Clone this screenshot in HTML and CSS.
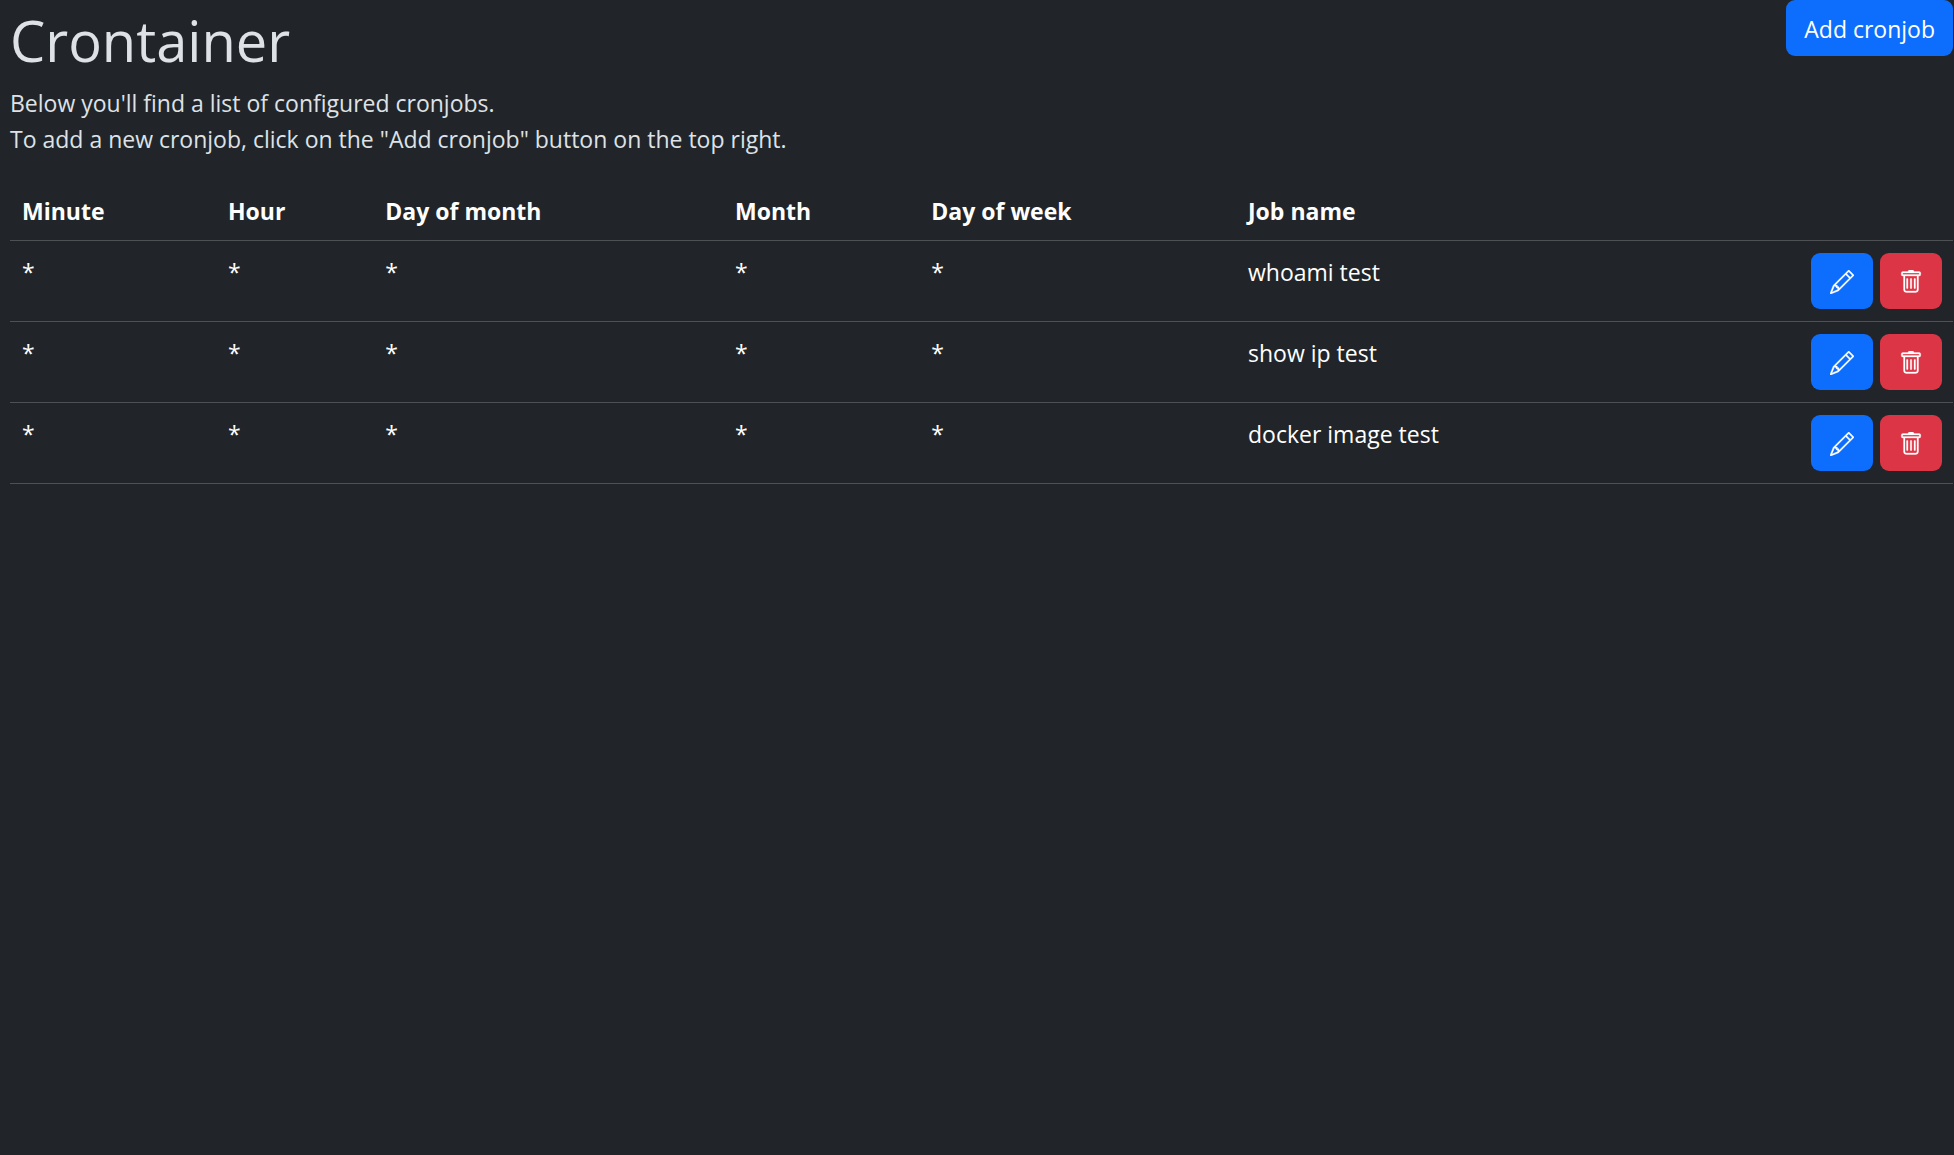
FILE: index.html
```html
<!DOCTYPE html>
<html lang="en">
<head>
    <meta charset="UTF-8">
    <meta name="viewport" content="width=device-width, initial-scale=1.0">
    <title>Crontainer</title>
    <link rel="stylesheet" href="styles.css">
</head>
<body>
    <!-- icons shared by all the rows -->
    <svg class="sprite" aria-hidden="true">
        <symbol id="pencil" viewBox="0 0 16 16">
            <path d="M12.146.146a.5.5 0 0 1 .708 0l3 3a.5.5 0 0 1 0 .708l-10 10a.5.5 0 0 1-.168.11l-5 2a.5.5 0 0 1-.65-.65l2-5a.5.5 0 0 1 .11-.168zM11.207 2.5 13.5 4.793 14.793 3.5 12.5 1.207zm1.586 3L10.5 3.207 4 9.707V10h.5a.5.5 0 0 1 .5.5v.5h.5a.5.5 0 0 1 .5.5v.5h.293zm-9.761 5.175-.106.106-1.528 3.821 3.821-1.528.106-.106A.5.5 0 0 1 5 12.5V12h-.5a.5.5 0 0 1-.5-.5V11h-.5a.5.5 0 0 1-.468-.325"/>
        </symbol>
        <symbol id="trash" viewBox="0 0 16 16">
            <path d="M5.5 5.5A.5.5 0 0 1 6 6v6a.5.5 0 0 1-1 0V6a.5.5 0 0 1 .5-.5m2.5 0a.5.5 0 0 1 .5.5v6a.5.5 0 0 1-1 0V6a.5.5 0 0 1 .5-.5m3 .5a.5.5 0 0 0-1 0v6a.5.5 0 0 0 1 0z"/>
            <path d="M14.5 3a1 1 0 0 1-1 1H13v9a2 2 0 0 1-2 2H5a2 2 0 0 1-2-2V4h-.5a1 1 0 0 1-1-1V2a1 1 0 0 1 1-1H6a1 1 0 0 1 1-1h2a1 1 0 0 1 1 1h3.5a1 1 0 0 1 1 1zM4.118 4 4 4.059V13a1 1 0 0 0 1 1h6a1 1 0 0 0 1-1V4.059L11.882 4zM2.5 3h11V2h-11z"/>
        </symbol>
    </svg>
    <div class="container">
        <header class="header">
            <div>
                <h1>Crontainer</h1>
                <p>Below you'll find a list of configured cronjobs.<br>
                To add a new cronjob, click on the "Add cronjob" button on the top right.</p>
            </div>
            <button type="button" class="btn btn-primary">Add cronjob</button>
        </header>
        <table class="jobs">
            <thead>
                <tr>
                    <th class="col-minute">Minute</th>
                    <th class="col-hour">Hour</th>
                    <th class="col-dom">Day of month</th>
                    <th class="col-month">Month</th>
                    <th class="col-dow">Day of week</th>
                    <th>Job name</th>
                    <th class="col-actions"></th>
                </tr>
            </thead>
            <tbody>
                <tr>
                    <td>*</td>
                    <td>*</td>
                    <td>*</td>
                    <td>*</td>
                    <td>*</td>
                    <td>whoami test</td>
                    <td class="col-actions">
                        <div class="actions">
                            <button type="button" class="btn btn-primary" aria-label="Edit"><svg class="icon"><use href="#pencil"/></svg></button>
                            <button type="button" class="btn btn-danger" aria-label="Delete"><svg class="icon"><use href="#trash"/></svg></button>
                        </div>
                    </td>
                </tr>
                <tr>
                    <td>*</td>
                    <td>*</td>
                    <td>*</td>
                    <td>*</td>
                    <td>*</td>
                    <td>show ip test</td>
                    <td class="col-actions">
                        <div class="actions">
                            <button type="button" class="btn btn-primary" aria-label="Edit"><svg class="icon"><use href="#pencil"/></svg></button>
                            <button type="button" class="btn btn-danger" aria-label="Delete"><svg class="icon"><use href="#trash"/></svg></button>
                        </div>
                    </td>
                </tr>
                <tr>
                    <td>*</td>
                    <td>*</td>
                    <td>*</td>
                    <td>*</td>
                    <td>*</td>
                    <td>docker image test</td>
                    <td class="col-actions">
                        <div class="actions">
                            <button type="button" class="btn btn-primary" aria-label="Edit"><svg class="icon"><use href="#pencil"/></svg></button>
                            <button type="button" class="btn btn-danger" aria-label="Delete"><svg class="icon"><use href="#trash"/></svg></button>
                        </div>
                    </td>
                </tr>
            </tbody>
        </table>
    </div>
</body>
</html>
```
FILE: styles.css
```css
*{
    box-sizing: border-box;
}
body{
    margin:0;
    background-color: #212529;
    color:#dee2e6;
    font-family: "Segoe UI", "Open Sans", "Noto Sans", sans-serif;
    font-size:23px;
    line-height:36px;
}
.sprite{
    display:none;
}
.container{
    padding:0 1px 0 10px;
}
.header{
    display:flex;
    justify-content: space-between;
    align-items: flex-start;
}
h1{
    margin:0 0 5px;
    font-size:56px;
    font-weight:400;
    line-height:80px;
}
p{
    margin:0 0 23px;
}
.btn{
    padding:10px 18px 8px;
    border:0;
    border-radius:9px;
    color:#fff;
    font:inherit;
    line-height:38px;
    white-space: nowrap;
    cursor:pointer;
}
.btn-primary{
    background-color: #0d6efd;
}
.btn-danger{
    background-color: #dc3545;
}
.btn:hover{
    filter:brightness(0.9);
}
.icon{
    display:block;
    width:24px;
    height:24px;
    margin:7px 1px;
    fill:currentColor;
    stroke:currentColor;
    stroke-width:0.2;
}
.jobs{
    width:100%;
    table-layout: fixed;
    border-collapse: separate;
    border-spacing:0;
    color:#fff;
}
.jobs th, .jobs td{
    padding:13px 12px 11px;
    border-bottom:1px solid #4d5154;
    text-align:left;
    vertical-align: top;
}
.jobs .col-actions{
    width:156px;
    padding:12px 11px 12px 12px;
}
.col-minute{
    width:10.6%;
}
.col-hour{
    width:8.1%;
}
.col-dom{
    width:18%;
}
.col-month{
    width:10.1%;
}
.col-dow{
    width:16.3%;
}
.actions{
    display:flex;
    justify-content: flex-end;
    gap:7px;
}
```
